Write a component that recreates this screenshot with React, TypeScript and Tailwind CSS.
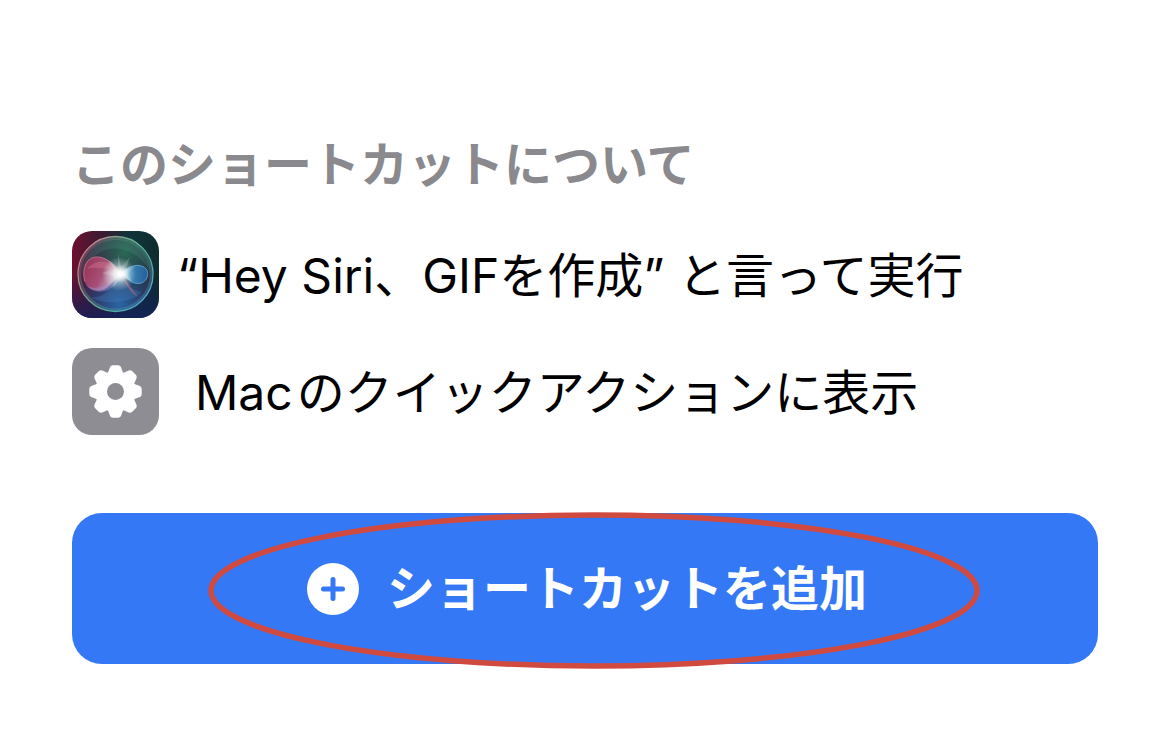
const TEETH = [0, 45, 90, 135, 180, 225, 270, 315];

function SiriIcon() {
  return (
    <svg viewBox="0 0 87 87" className="size-[87px] shrink-0 rounded-[20px]" aria-hidden="true">
      <defs>
        <linearGradient id="base" x1="0" y1="0" x2="1" y2="0">
          <stop offset="0" stopColor="#6a1130" />
          <stop offset="0.35" stopColor="#3c1a33" />
          <stop offset="0.65" stopColor="#10343a" />
          <stop offset="1" stopColor="#0f2c2e" />
        </linearGradient>
        <linearGradient id="floor" x1="0" y1="0" x2="0" y2="1">
          <stop offset="0.5" stopColor="#101c50" stopOpacity="0" />
          <stop offset="1" stopColor="#14205c" stopOpacity="0.85" />
        </linearGradient>
        <linearGradient id="ring" x1="0" y1="0.2" x2="1" y2="0.8">
          <stop offset="0" stopColor="#d8788c" />
          <stop offset="0.4" stopColor="#6fae8f" />
          <stop offset="0.7" stopColor="#4fae9c" />
          <stop offset="1" stopColor="#5aa6dc" />
        </linearGradient>
        <radialGradient id="orbGreen" cx="0.62" cy="0.2" r="0.6">
          <stop offset="0" stopColor="#2b7458" stopOpacity="0.85" />
          <stop offset="1" stopColor="#1f5b5c" stopOpacity="0" />
        </radialGradient>
        <radialGradient id="orbBlue" cx="0.55" cy="0.9" r="0.55">
          <stop offset="0" stopColor="#2a6cae" stopOpacity="0.9" />
          <stop offset="1" stopColor="#235a9c" stopOpacity="0" />
        </radialGradient>
        <linearGradient id="pink" x1="0" y1="0" x2="1" y2="0.4">
          <stop offset="0" stopColor="#a8355c" />
          <stop offset="0.6" stopColor="#c4577f" />
          <stop offset="1" stopColor="#f4d6e4" />
        </linearGradient>
        <linearGradient id="blue" x1="0" y1="0" x2="1" y2="0">
          <stop offset="0" stopColor="#d7efff" />
          <stop offset="0.4" stopColor="#3f8fc8" />
          <stop offset="1" stopColor="#2467ae" />
        </linearGradient>
        <radialGradient id="flare">
          <stop offset="0" stopColor="#ffffff" />
          <stop offset="0.3" stopColor="#ffffff" stopOpacity="0.85" />
          <stop offset="1" stopColor="#d8f0ee" stopOpacity="0" />
        </radialGradient>
      </defs>
      <rect width="87" height="87" fill="url(#base)" />
      <rect width="87" height="87" fill="url(#floor)" />
      <circle cx="43.500" cy="43" r="37.500" fill="#3b2c4c" fillOpacity="0.6" />
      <circle cx="43.500" cy="43" r="37.500" fill="url(#orbGreen)" />
      <circle cx="43.500" cy="43" r="37.500" fill="url(#orbBlue)" />
      <path d="M10 46C8 26 24 9 43 8C62 8 77 24 78 40C68 23 51 14 34 19C21 23 12 34 10 46Z" fill="#65b596" fillOpacity="0.16" />
      <path d="M49 43C41 31 32 25 23 26C12 28 10 42 13 51C17 62 31 62 38 54Z" fill="url(#pink)" fillOpacity="0.8" />
      <path d="M49 43C38 27 23 28 15 38C26 35 38 38 49 43Z" fill="#e8899c" fillOpacity="0.3" />
      <path d="M13 53C20 60 34 57 49 43C43 62 24 66 13 53Z" fill="#9c8cc8" fillOpacity="0.5" />
      <path d="M49 43C56 34 69 31 75 39C78 48 70 56 60 51C55 48 53 45 49 43Z" fill="url(#blue)" fillOpacity="0.8" />
      <path d="M49 43C56 34 69 31 75 39C78 48 70 56 60 51C55 48 53 45 49 43Z" fill="none" stroke="#7ec3e8" strokeOpacity="0.6" />
      <path d="M48 44C39 57 33 68 18 66C34 75 59 72 70 61C60 60 54 52 48 44Z" fill="#4a91ce" fillOpacity="0.25" />
      <path d="M49 43L66 66C59 62 54 55 49 43Z" fill="#b3677e" fillOpacity="0.6" />
      <path d="M49 43C41 31 32 25 23 26C12 28 10 42 13 51" fill="none" stroke="#e58aa2" strokeOpacity="0.6" />
      <path d="M46 22L49 36L58 26L54 38L64 35L55 43L60 50L49 47L41 57L43 46L30 42L42 38L35 28L46 36Z" fill="#ffffff" fillOpacity="0.18" />
      <circle cx="47" cy="43" r="17" fill="url(#flare)" fillOpacity="0.75" />
      <circle cx="48.500" cy="43" r="9" fill="url(#flare)" />
      <circle cx="43.500" cy="43" r="37.500" fill="none" stroke="url(#ring)" strokeWidth="1.300" />
      <circle cx="43.500" cy="43" r="35.500" fill="none" stroke="url(#ring)" strokeWidth="2.500" strokeOpacity="0.3" />
    </svg>
  );
}

function GearIcon() {
  return (
    <svg viewBox="0 0 87 87" className="size-[87px] shrink-0 rounded-[20px] bg-[#8e8d93]" aria-hidden="true">
      <g fill="#ffffff">
        <circle cx="43.500" cy="43.500" r="20.500" />
        {TEETH.map((angle) => (
          <path
            key={angle}
            d="M35.500 26L37.500 20.500Q38.500 17.300 41 17.300H46Q48.500 17.300 49.500 20.500L51.500 26Z"
            transform={`rotate(${angle} 43.5 43.5)`}
          />
        ))}
      </g>
      <circle cx="43.500" cy="43.500" r="8.500" fill="#8e8d93" />
    </svg>
  );
}

function PlusIcon() {
  return (
    <svg viewBox="0 0 52 52" className="size-[52px] shrink-0" aria-hidden="true">
      <circle cx="26" cy="26" r="26" fill="#ffffff" />
      <path d="M26 16.500V35.500M16.500 26H35.500" stroke="#3478f6" strokeWidth="5" strokeLinecap="round" />
    </svg>
  );
}

export default function App() {
  return (
    <main
      lang="ja"
      className="min-h-screen bg-white px-[72px] pt-[133px] pb-[88px] font-['Inter','Noto_Sans_CJK_JP',sans-serif] text-[48px] leading-[64px] text-black"
    >
      <h1 className="font-bold text-[#8a8a8e]">
        このショートカットについて
      </h1>
      <ul className="mt-[34px] flex flex-col gap-[30px]">
        <li className="flex items-center gap-[18px]">
          <SiriIcon />
          <span className="pt-[2px]">“Hey Siri、GIFを作成” と言って実行</span>
        </li>
        <li className="flex items-center gap-[36px]">
          <GearIcon />
          <span className="pt-[2px]">
            <span className="mr-1">Mac</span>のクイックアクションに表示
          </span>
        </li>
      </ul>
      <div className="relative mt-[78px]">
        <button
          type="button"
          className="flex h-[151px] w-full items-center justify-center gap-[28px] rounded-[30px] bg-[#3478f6] pl-1 font-bold text-white"
        >
          <PlusIcon />
          <span>ショートカットを追加</span>
        </button>
        <svg
          viewBox="0 0 772 157"
          className="pointer-events-none absolute -top-px left-[136px] h-[157px] w-[772px]"
          aria-hidden="true"
        >
          <ellipse cx="386" cy="78.500" rx="383" ry="75.500" fill="none" stroke="#d14a40" strokeWidth="5.500" />
        </svg>
      </div>
    </main>
  );
}
